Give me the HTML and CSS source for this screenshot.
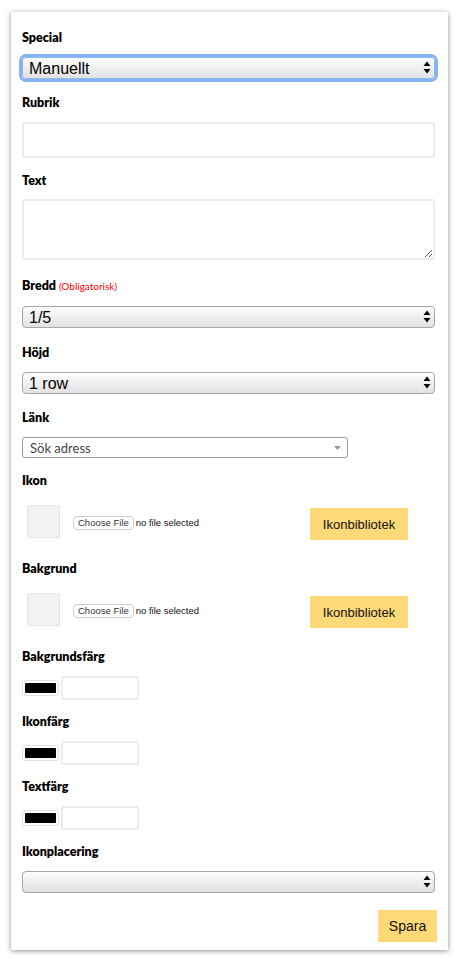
FILE: index.html
```html
<!DOCTYPE html>
<html lang="sv">
<head>
<meta charset="utf-8">
<link rel="stylesheet" href="styles.css">
</head>
<body>
<form class="card">
  <div class="group">
    <label class="lbl">Special</label>
    <div class="sel-wrap">
      <select class="sel focus"><option>Manuellt</option></select>
      <svg class="updown" width="8" height="13" viewBox="0 0 8 13"><path d="M4 0.5 L7.5 5 H0.5 Z M4 12.5 L7.5 8 H0.5 Z" fill="#000"/></svg>
    </div>
  </div>
  <div class="group g-rubrik">
    <label class="lbl">Rubrik</label>
    <input class="txt" type="text">
  </div>
  <div class="group g-text">
    <label class="lbl">Text</label>
    <textarea class="area"></textarea>
  </div>
  <div class="group g-bredd">
    <label class="lbl">Bredd <span class="req">(Obligatorisk)</span></label>
    <div class="sel-wrap">
      <select class="sel"><option>1/5</option></select>
      <svg class="updown" width="8" height="13" viewBox="0 0 8 13"><path d="M4 0.5 L7.5 5 H0.5 Z M4 12.5 L7.5 8 H0.5 Z" fill="#000"/></svg>
    </div>
  </div>
  <div class="group">
    <label class="lbl">Höjd</label>
    <div class="sel-wrap">
      <select class="sel"><option>1 row</option></select>
      <svg class="updown" width="8" height="13" viewBox="0 0 8 13"><path d="M4 0.5 L7.5 5 H0.5 Z M4 12.5 L7.5 8 H0.5 Z" fill="#000"/></svg>
    </div>
  </div>
  <div class="group g-link">
    <label class="lbl">Länk</label>
    <div class="search">
      <span class="search-text">Sök adress</span>
      <svg class="caret" width="7" height="4" viewBox="0 0 7 4"><path d="M0 0 H7 L3.5 4 Z" fill="#999"/></svg>
    </div>
  </div>
  <div class="group">
    <label class="lbl">Ikon</label>
    <div class="file-row">
      <div class="thumb"></div>
      <button type="button" class="choose">Choose File</button>
      <span class="nofile">no file selected</span>
      <button type="button" class="yellow lib">Ikonbibliotek</button>
    </div>
  </div>
  <div class="group">
    <label class="lbl">Bakgrund</label>
    <div class="file-row">
      <div class="thumb"></div>
      <button type="button" class="choose">Choose File</button>
      <span class="nofile">no file selected</span>
      <button type="button" class="yellow lib">Ikonbibliotek</button>
    </div>
  </div>
  <div class="group g-color">
    <label class="lbl">Bakgrundsfärg</label>
    <div class="color-row">
      <span class="swatch"><span class="swatch-in"></span></span>
      <input class="hex" type="text">
    </div>
  </div>
  <div class="group g-color">
    <label class="lbl">Ikonfärg</label>
    <div class="color-row">
      <span class="swatch"><span class="swatch-in"></span></span>
      <input class="hex" type="text">
    </div>
  </div>
  <div class="group g-color">
    <label class="lbl">Textfärg</label>
    <div class="color-row">
      <span class="swatch"><span class="swatch-in"></span></span>
      <input class="hex" type="text">
    </div>
  </div>
  <div class="group g-last">
    <label class="lbl">Ikonplacering</label>
    <div class="sel-wrap">
      <select class="sel"><option></option></select>
      <svg class="updown" width="8" height="13" viewBox="0 0 8 13"><path d="M4 0.5 L7.5 5 H0.5 Z M4 12.5 L7.5 8 H0.5 Z" fill="#000"/></svg>
    </div>
  </div>
  <div class="actions">
    <button type="button" class="yellow save">Spara</button>
  </div>
</form>
</body>
</html>
```

FILE: styles.css
```css
* { box-sizing: border-box; }
html, body { margin: 0; padding: 0; background: #fff; }
body { padding: 12px 12px 12px 11px; }

.card {
  width: 437px;
  background: #fff;
  padding: 18px 13px 8px 11px;
  box-shadow: 0 1px 5px rgba(0,0,0,0.45);
  display: flex;
  flex-direction: column;
  font-family: "Liberation Sans", Arial, sans-serif;
}

.group { display: flex; flex-direction: column; margin-bottom: 16px; }
.g-rubrik { margin-bottom: 15px; }
.g-text .lbl { margin-bottom: 10px; }
.g-text { margin-bottom: 18px; }
.g-bredd .lbl { margin-bottom: 12px; }
.g-bredd { margin-bottom: 17px; }
.g-link { margin-bottom: 15px; }
.g-color { margin-bottom: 14px; }
.g-last { margin-bottom: 17px; }

.lbl {
  font-family: Lato, "Open Sans", sans-serif;
  font-weight: 800;
  font-size: 12.5px;
  line-height: 16px;
  color: #000;
  margin-bottom: 11px;
}
.req {
  color: #f00;
  font-weight: 400;
  font-size: 10px;
}

.sel-wrap { position: relative; height: 22px; }
.sel {
  appearance: none;
  -webkit-appearance: none;
  width: 100%;
  height: 22px;
  margin: 0;
  padding: 0 0 0 6px;
  font-family: "Liberation Sans", Arial, sans-serif;
  font-size: 16px;
  color: #000;
  border: 1px solid #a6a6a6;
  border-radius: 4px;
  background: linear-gradient(#fdfdfd, #f0f0f0 45%, #e2e2e2);
  outline: none;
}
.sel.focus {
  box-shadow: 0 0 0 3px #86b3f2;
  border-color: #8fb7f0;
}
.updown { position: absolute; right: 4px; top: 4px; pointer-events: none; }

.txt {
  height: 36px;
  width: 100%;
  margin: 0;
  border: 2px solid #ececec;
  border-radius: 2px;
  background: #fff;
}
.area {
  height: 61px;
  width: 100%;
  margin: 0;
  border: 2px solid #ececec;
  border-radius: 2px;
  background: #fff;
  resize: vertical;
  display: block;
}

.search {
  width: 326px;
  height: 21px;
  border: 1px solid #9a9a9a;
  border-radius: 3px;
  display: flex;
  align-items: center;
  justify-content: space-between;
  padding: 0 6px 0 7px;
  background: #fff;
}
.search-text {
  font-family: Lato, "Open Sans", sans-serif;
  font-size: 13px;
  color: #444;
}

.file-row {
  display: flex;
  align-items: center;
  padding: 5px 0 5px 5px;
  height: 45px;
}
.thumb {
  width: 33px;
  height: 33px;
  background: #f2f2f2;
  border: 1px solid #e4e4e4;
  border-radius: 2px;
  align-self: flex-start;
}
.choose {
  margin-left: 13px;
  height: 14px;
  padding: 0 4px;
  font-family: "Liberation Sans", Arial, sans-serif;
  font-size: 9.5px;
  color: #333;
  background: #fff;
  border: 1px solid #cfcfcf;
  border-radius: 4px;
  line-height: 12px;
}
.nofile {
  margin-left: 2px;
  font-family: "Liberation Sans", Arial, sans-serif;
  font-size: 9.5px;
  color: #111;
}
.yellow {
  background: #ffd878;
  border: none;
  border-radius: 0;
  font-family: "Liberation Sans", Arial, sans-serif;
  font-size: 13px;
  color: #111;
  padding: 0;
}
.lib {
  margin-left: auto;
  margin-right: 27px;
  width: 98px;
  height: 32px;
  margin-top: 3px;
}

.color-row { display: flex; align-items: center; height: 24px; }
.swatch {
  width: 37px;
  height: 16px;
  border: 1px solid #e2e2e2;
  border-radius: 3px;
  padding: 2px;
  background: #fff;
  display: flex;
}
.swatch-in { flex: 1; background: #000; border-radius: 1px; }
.hex {
  margin: 0 0 0 2px;
  width: 78px;
  height: 24px;
  border: 2px solid #ececec;
  border-radius: 2px;
  background: #fff;
}

.actions { display: flex; justify-content: flex-end; margin-right: -2px; }
.save { width: 59px; height: 32px; font-size: 14px; }
```
